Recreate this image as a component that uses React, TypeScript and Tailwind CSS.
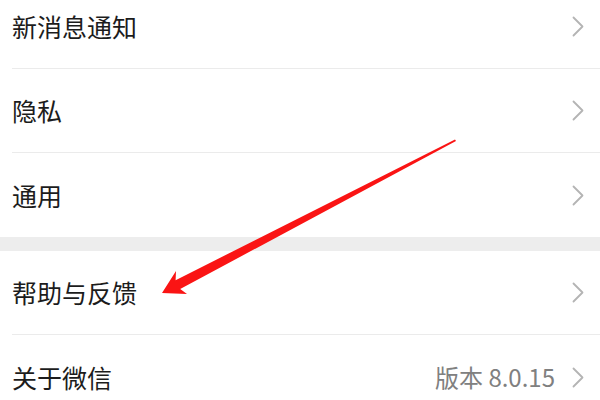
import React from 'react';

interface RowProps {
  label: string;
  value?: string;
  divider?: boolean;
}

const Chevron: React.FC = () => (
  <svg width="12" height="21" viewBox="0 0 12 21" className="shrink-0">
    <polyline
      points="1.5,1.5 10.5,10.5 1.5,19.5"
      fill="none"
      stroke="#b4b4b4"
      strokeWidth="1.8"
      strokeLinecap="round"
      strokeLinejoin="round"
    />
  </svg>
);

const Row: React.FC<RowProps> = ({ label, value, divider = true }) => (
  <div className="pl-3 bg-white">
    <div
      className={`h-[84px] flex items-center justify-between pr-4 ${
        divider ? 'border-b border-[#ebebeb]' : ''
      }`}
    >
      <span className="text-[25px] text-[#1c1c1c] leading-none">{label}</span>
      <div className="flex items-center gap-[17px]">
        {value && (
          <span className="text-[24px] text-[#808080] leading-none">{value}</span>
        )}
        <Chevron />
      </div>
    </div>
  </div>
);

export default function App() {
  return (
    <div
      className="relative w-[600px] h-[400px] overflow-hidden bg-white"
      style={{ fontFamily: '"Noto Sans CJK SC", "Noto Sans", sans-serif' }}
    >
      <div className="-mt-[15px]">
        <Row label="新消息通知" />
        <Row label="隐私" />
        <Row label="通用" divider={false} />
        <div className="h-[14px] bg-[#ededed]" />
        <Row label="帮助与反馈" />
        <Row label="关于微信" value="版本 8.0.15" divider={false} />
      </div>

      {/* annotation arrow */}
      <svg
        className="absolute inset-0 pointer-events-none"
        width="600"
        height="400"
        viewBox="0 0 600 400"
      >
        <polygon
          points="455,139.5 456,141 180.2,289 187,294 162,293 176,271 175.6,280.2"
          fill="#fa1414"
        />
      </svg>
    </div>
  );
}
